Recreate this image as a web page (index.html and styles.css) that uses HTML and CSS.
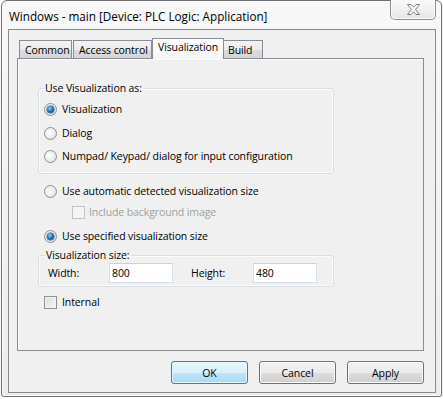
FILE: index.html
```html
<!DOCTYPE html>
<html lang="en">
<head>
    <meta charset="UTF-8">
    <title>Windows - main</title>
    <link rel="stylesheet" href="styles.css">
</head>
<body>
    <div class="window">
        <div class="titlebar">
            <span class="title">Windows - main [Device: PLC Logic: Application]</span>
            <div class="close-btn">
                <svg width="13" height="11" viewBox="0 0 13 11">
                    <polygon points="0.5,0.5 4,0.5 6.5,3.2 9,0.5 12.5,0.5 8.5,5.5 12.5,10.5 9,10.5 6.5,7.8 4,10.5 0.5,10.5 4.5,5.5" fill="#fdfdfd" stroke="#7d7d7d" stroke-width="1" stroke-linejoin="round"/>
                </svg>
            </div>
        </div>

        <div class="client">
            <div class="tabs">
                <div class="tab tab-common">Common</div>
                <div class="tab tab-access">Access control</div>
                <div class="tab tab-visu active">Visualization</div>
                <div class="tab tab-build">Build</div>
            </div>

            <div class="panel">
                <!-- Use Visualization as -->
                <fieldset class="group group-use">
                    <legend>Use Visualization as:</legend>
                    <label class="opt"><span class="radio checked"></span>Visualization</label>
                    <label class="opt row2"><span class="radio"></span>Dialog</label>
                    <label class="opt row3"><span class="radio"></span>Numpad/ Keypad/ dialog for input configuration</label>
                </fieldset>

                <label class="opt outer auto"><span class="radio"></span>Use automatic detected visualization size</label>
                <label class="opt sub disabled"><span class="check"></span>Include background image</label>
                <label class="opt outer specified"><span class="radio checked"></span>Use specified visualization size</label>

                <!-- Visualization size -->
                <fieldset class="group group-size">
                    <legend>Visualization size:</legend>
                    <div class="size-row">
                        <span class="size-label">Width:</span>
                        <input class="field" type="text" value="800">
                        <span class="size-label height-label">Height:</span>
                        <input class="field" type="text" value="480">
                    </div>
                </fieldset>

                <label class="opt outer internal"><span class="check"></span>Internal</label>
            </div>

            <div class="buttons">
                <button class="btn default">OK</button>
                <button class="btn">Cancel</button>
                <button class="btn">Apply</button>
            </div>
        </div>
    </div>
</body>
</html>
```

FILE: styles.css
```css
* {
    box-sizing: border-box;
}

body {
    margin: 0;
    padding: 0 0 0 1px;
    background: #ffffff;
    font-family: "Open Sans", "Noto Sans", sans-serif;
    font-size: 10.5px;
    letter-spacing: -0.1px;
    color: #000;
}

.window {
    width: 441px;
    height: 397px;
    border: 1px solid #707070;
    border-radius: 6px 6px 3px 3px;
    background: linear-gradient(#f8f8f8, #ececec);
    box-shadow: inset 0 0 0 1px #fbfbfb, 2px 2px 5px rgba(0, 0, 0, 0.12);
    padding: 0 5px 3px 6px;
}

/* title bar */
.titlebar {
    height: 28px;
    display: flex;
    align-items: center;
    justify-content: space-between;
}

.title {
    margin-left: 1px;
    margin-top: 1px;
    font-size: 11.7px;
    letter-spacing: 0;
}

.close-btn {
    align-self: flex-start;
    margin-top: -1px;
    width: 46px;
    height: 20px;
    border: 1px solid #8f8f8f;
    border-top: none;
    border-radius: 0 0 5px 5px;
    background: linear-gradient(#fafafa, #e6e6e6);
    box-shadow: inset 0 -1px 0 #fdfdfd, inset 1px 0 0 #fdfdfd, inset -1px 0 0 #fdfdfd;
    display: flex;
    align-items: center;
    justify-content: center;
}

/* client area */
.client {
    height: 364px;
    border: 1px solid #8a8a8a;
    background: #f0f0f0;
    padding: 8px 11px 8px 8px;
}

.tabs {
    display: flex;
    align-items: flex-end;
    height: 21px;
    margin-bottom: -1px;
    padding-left: 2px;
    position: relative;
    z-index: 1;
}

.tab {
    height: 19px;
    border: 1px solid #898c95;
    background: linear-gradient(#f3f3f3, #ebebeb 50%, #dcdcdc 51%, #d6d6d6);
    padding: 2px 0 0 5px;
    line-height: 14px;
    white-space: nowrap;
}

.tab-common { width: 53px; }
.tab-access { width: 79px; margin-left: 1px; }
.tab-visu { width: 72px; margin-left: 0; }
.tab-build { width: 39px; margin-left: 0; border-left: none; padding-left: 4px; }

.tab.active {
    height: 21px;
    border-bottom: none;
    background: linear-gradient(#ffffff, #f6f6f6);
    padding-top: 1px;
}

.panel {
    height: 293px;
    border: 1px solid #898c95;
    background: #f0f0f0;
    box-shadow: inset 1px 1px 0 #fbfbfb;
    padding: 0;
    overflow: hidden;
}

/* group boxes */
.group {
    width: 296px;
    margin: 0 0 0 20px;
    border: 1px solid #d5dfe5;
    border-radius: 3px;
    box-shadow: inset 0 0 0 1px #fbfbfb;
    min-width: 0;
}

.group legend {
    padding: 0 3px 0 1px;
    line-height: 16px;
    height: 16px;
}

.group-use {
    margin-top: 21px;
    padding: 5px 0 9px 5px;
}

.group-size {
    margin-top: 3px;
    padding: 0 0 3px 9px;
}

.group-size legend {
    margin-left: -3px;
}

/* options */
.opt {
    display: flex;
    align-items: center;
    height: 16px;
    white-space: nowrap;
}

.opt.row2 { margin-top: 8px; }
.opt.row3 { margin-top: 7px; }

.opt.outer { margin-left: 26px; }
.opt.auto { margin-top: 9px; }
.opt.sub { margin-left: 54px; margin-top: 5px; }
.opt.specified { margin-top: 8px; }
.opt.internal { margin-top: 7px; }

.opt.disabled {
    color: #a0a0a0;
}

.radio {
    width: 13px;
    height: 13px;
    border-radius: 50%;
    border: 1px solid #8e8f8f;
    background: radial-gradient(circle at 40% 40%, #ffffff 0%, #ececec 55%, #d3d3d3 100%);
    margin-right: 5px;
    position: relative;
    flex-shrink: 0;
}

.radio.checked::after {
    content: "";
    position: absolute;
    left: 2px;
    top: 2px;
    width: 7px;
    height: 7px;
    border-radius: 50%;
    background: radial-gradient(circle at 40% 35%, #8fd6f7 0%, #1f78c0 45%, #0b3f70 100%);
    box-shadow: 0 0 0 0.5px #234d6e;
}

.check {
    width: 13px;
    height: 13px;
    border: 1px solid #8e8f8f;
    background: linear-gradient(135deg, #dcdcdc, #f8f8f8);
    box-shadow: inset 0 0 0 1px #f4f4f4;
    margin-right: 5px;
    flex-shrink: 0;
}

.disabled .check {
    border-color: #c4c4c4;
    background: #f4f4f4;
    box-shadow: none;
    margin-right: 4px;
}

/* size fields */
.size-row {
    display: flex;
    align-items: center;
    height: 20px;
}

.size-label {
    width: 61px;
}

.height-label {
    width: 62px;
    margin-left: 18px;
}

.field {
    width: 64px;
    height: 20px;
    border: 1px solid #dcdfe4;
    border-top-color: #cdd0d6;
    background: #fff;
    padding: 0 0 0 2px;
    margin: 0;
    font-family: inherit;
    font-size: inherit;
    letter-spacing: inherit;
    color: #000;
    outline: none;
}

/* dialog buttons */
.buttons {
    display: flex;
    justify-content: flex-end;
    gap: 11px;
    margin-top: 10px;
}

.btn {
    width: 77px;
    height: 23px;
    border: 1px solid #707070;
    border-radius: 3px;
    background: linear-gradient(#f2f2f2, #ebebeb 50%, #dddddd 51%, #cfcfcf);
    box-shadow: inset 0 0 0 1px #fcfcfc;
    font-family: inherit;
    font-size: inherit;
    letter-spacing: inherit;
    color: #000;
    padding: 0;
}

.btn.default {
    border-color: #3c7fb1;
    background: linear-gradient(#eaf6fd, #d9f0fc 50%, #bee6fd 51%, #a7d9f5);
    box-shadow: inset 0 0 0 1px #e8f4fb;
}
```
